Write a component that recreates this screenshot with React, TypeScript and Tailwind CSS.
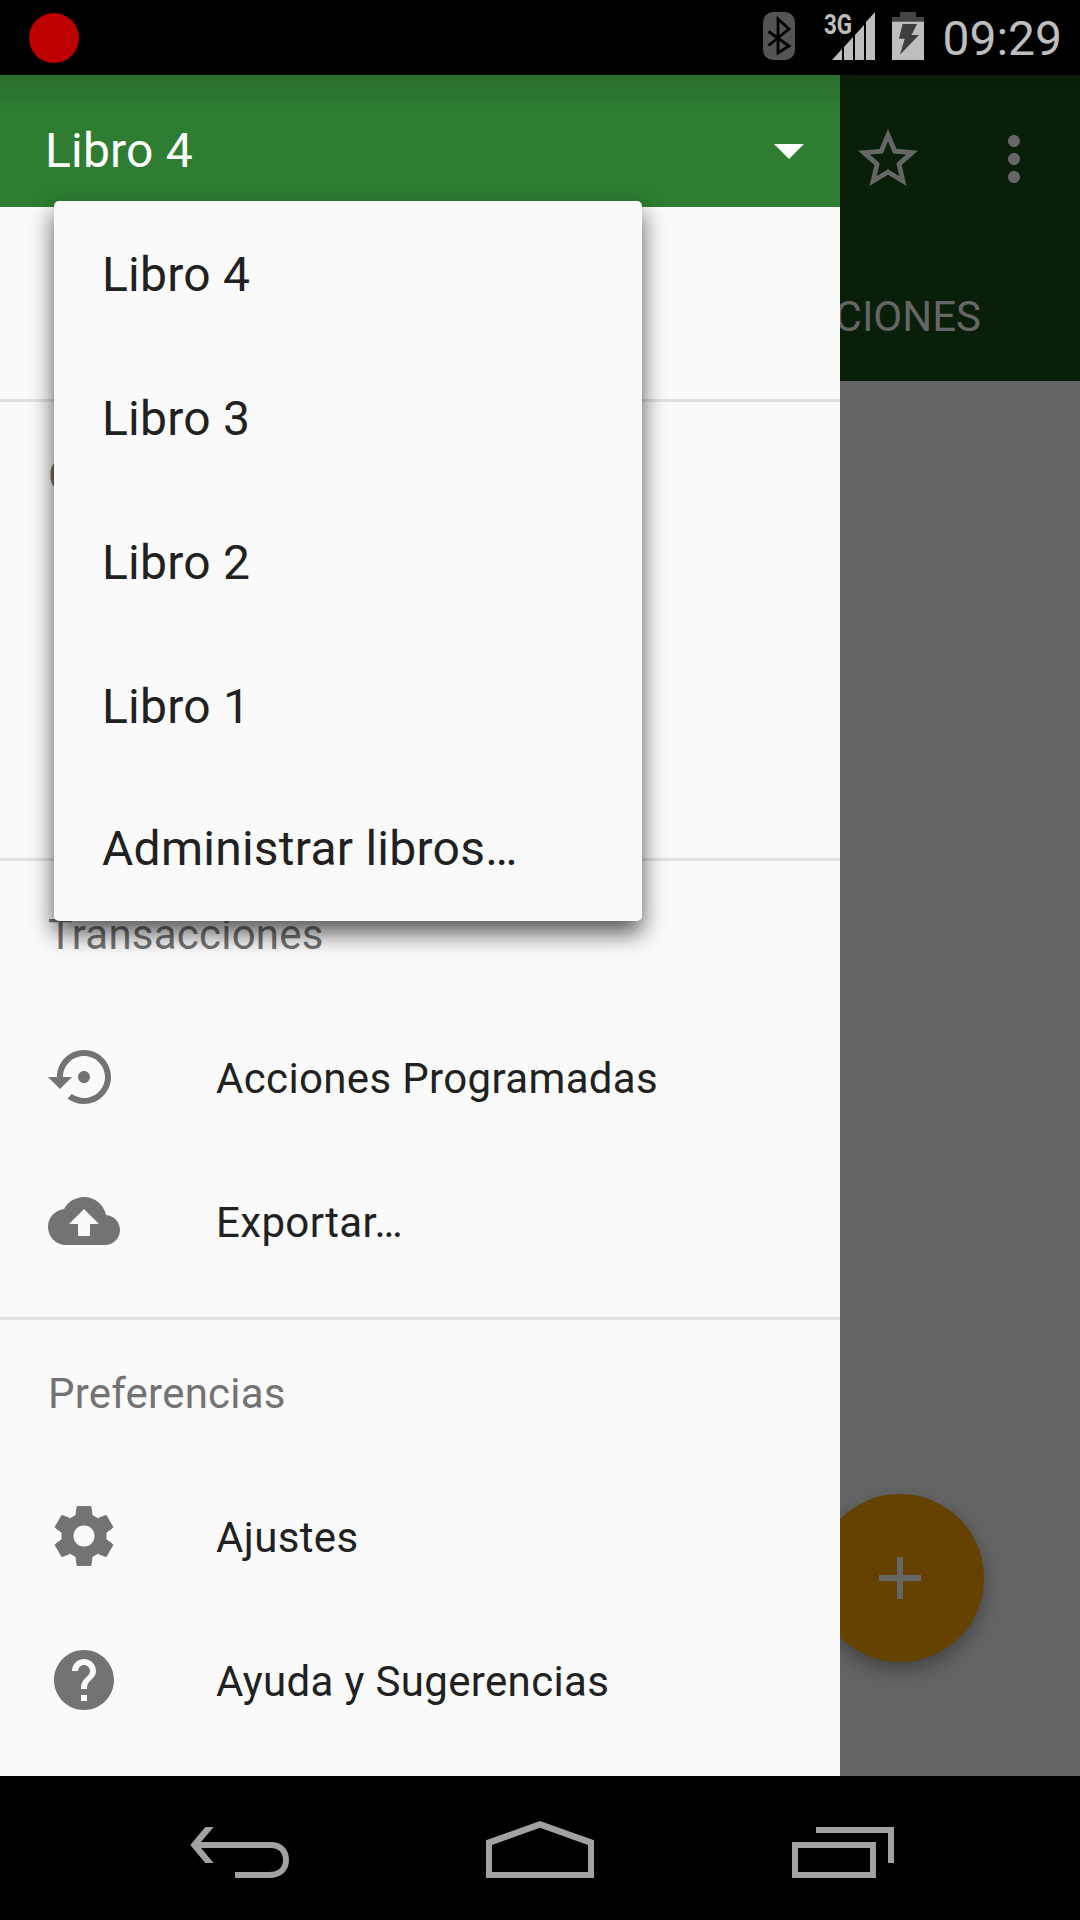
import type { ReactNode } from "react";

const paths = {
  restore:
    "M14 12c0-1.1-.9-2-2-2s-2 .9-2 2 .9 2 2 2 2-.9 2-2zm-2-9c-4.97 0-9 4.03-9 9H0l4 4 4-4H5c0-3.87 3.13-7 7-7s7 3.13 7 7-3.13 7-7 7c-1.51 0-2.91-.49-4.06-1.3l-1.42 1.44C8.04 20.3 9.94 21 12 21c4.97 0 9-4.03 9-9s-4.03-9-9-9z",
  cloud:
    "M19.35 10.04C18.67 6.59 15.64 4 12 4 9.11 4 6.6 5.64 5.35 8.04 2.34 8.36 0 10.91 0 14c0 3.31 2.69 6 6 6h13c2.76 0 5-2.24 5-5 0-2.64-2.05-4.78-4.65-4.96zM14 13v4h-4v-4H7l5-5 5 5h-3z",
  help: "M12 2C6.48 2 2 6.48 2 12s4.48 10 10 10 10-4.48 10-10S17.52 2 12 2zm1 17h-2v-2h2v2zm2.07-7.75l-.9.92C13.45 12.9 13 13.5 13 15h-2v-.5c0-1.1.45-2.1 1.17-2.83l1.24-1.26c.37-.36.59-.86.59-1.41 0-1.1-.9-2-2-2s-2 .9-2 2H8c0-2.21 1.79-4 4-4s4 1.79 4 4c0 .88-.36 1.68-.93 2.25z",
  star: "M22 9.24l-7.19-.62L12 2 9.19 8.63 2 9.24l5.46 4.73L5.82 21 12 17.27 18.18 21l-1.63-7.03L22 9.24zM12 15.4l-3.76 2.27 1-4.28-3.32-2.88 4.38-.38L12 6.1l1.71 4.04 4.38.38-3.32 2.88 1 4.28L12 15.4z",
  more: "M12 8c1.1 0 2-.9 2-2s-.9-2-2-2-2 .9-2 2 .9 2 2 2zm0 2c-1.1 0-2 .9-2 2s.9 2 2 2 2-.9 2-2-.9-2-2-2zm0 6c-1.1 0-2 .9-2 2s.9 2 2 2 2-.9 2-2-.9-2-2-2z",
  caret: "M7 10l5 5 5-5z",
  plus: "M19 13h-6v6h-2v-6H5v-2h6V5h2v6h6v2z",
};

function Icon({ d }: { d: string }) {
  return (
    <svg viewBox="0 0 24 24" className="size-[72px] shrink-0" fill="currentColor">
      <path d={d} />
    </svg>
  );
}

function Gear() {
  return (
    <svg viewBox="-12 -12 24 24" className="size-[72px] shrink-0" fill="currentColor">
      <path
        fillRule="evenodd"
        stroke="currentColor"
        strokeWidth=".3"
        strokeLinejoin="round"
        transform="scale(.985)"
        d="M-2.75-7L-2.35-10H2.35L2.75-7 4.69-5.88 7.48-7.03 9.83-2.96 7.44-1.12V1.12L9.83 2.96 7.48 7.03 4.69 5.88 2.75 7 2.35 10H-2.35L-2.75 7-4.69 5.88-7.48 7.03-9.83 2.96-7.44 1.12V-1.12L-9.83-2.96-7.48-7.03-4.69-5.88zM-3.75 0a3.75 3.75 0 1 0 7.5 0a3.75 3.75 0 1 0-7.5 0z"
      />
    </svg>
  );
}

function StatusBar() {
  return (
    <div className="flex h-[75px] shrink-0 items-center justify-between bg-black pl-[29px] pr-[18px]">
      <div className="size-[50px] rounded-full bg-[#be0000]" />
      <div className="flex items-center text-[#bebebe]">
        <svg viewBox="0 0 32 48" className="mb-[3px] mr-[30px] h-12 w-8">
          <rect width="32" height="48" rx="10" fill="#545454" />
          <path
            d="M5.5 19.5L26 34 15 41V7L26 17 5.5 33.5"
            fill="none"
            stroke="#000"
            strokeWidth="2.8"
          />
        </svg>
        <div className="relative mb-[3px] mr-[17px] h-12 w-[50px]">
          <span className="absolute -left-px top-px origin-left scale-x-[0.83] text-[27px] font-bold leading-6">
            3G
          </span>
          <svg viewBox="0 0 50 48" className="h-12 w-[50px]" fill="currentColor">
            <path d="M7 48L17 37V48zM19 48V35L28 25V48zM30 48V23L39 13V48zM41 48V10L50 0V48z" />
          </svg>
        </div>
        <svg viewBox="0 0 32 48" className="mb-[3px] mr-[18px] h-12 w-8">
          <path d="M8 0H24V5H32V10H0V5H8z" fill="#444" />
          <rect y="9.7" width="32" height="38.3" fill="#bebebe" />
          <path d="M10.5 12H25L19.5 23H27L8 42.7 12.7 26.7H7z" fill="#3e3e3e" />
        </svg>
        <span className="pt-[3px] text-[48px] leading-[56px]">09:29</span>
      </div>
    </div>
  );
}

function Background() {
  return (
    <div className="relative flex h-full flex-col bg-[#646464] text-[#666]">
      <div className="flex h-[306px] flex-col bg-[#0a1f0a]">
        <div className="flex h-[168px] items-center justify-end gap-[54px] pr-[30px]">
          <Icon d={paths.star} />
          <Icon d={paths.more} />
        </div>
        <div className="flex h-[138px] items-center justify-end pr-[99px] pt-2 text-[42px]">
          TRANSACCIONES
        </div>
      </div>
      <div className="absolute bottom-[114px] right-24 flex size-[168px] items-center justify-center rounded-full bg-[#664200] shadow-[0_8px_18px_rgba(0,0,0,0.33)]">
        <Icon d={paths.plus} />
      </div>
    </div>
  );
}

function Section({ title, children }: { title: string; children?: ReactNode }) {
  return (
    <section className="flex flex-col border-t-[3px] border-[#e0e0e0] pb-6">
      <h2 className="flex h-36 items-center px-12 pt-0.5 text-[42px] tracking-[0.22px] text-[#737373]">
        {title}
      </h2>
      {children}
    </section>
  );
}

function Item({ icon, label }: { icon: ReactNode; label: string }) {
  return (
    <div className="flex h-36 items-center gap-24 px-12 text-[42px] tracking-[0.35px] text-[#212121]">
      <span className="text-[#737373]">{icon}</span>
      <span className="pt-0.5">{label}</span>
    </div>
  );
}

const books = ["Libro 4", "Libro 3", "Libro 2", "Libro 1"];

function Drawer() {
  return (
    <aside className="absolute inset-y-0 left-0 flex w-[840px] flex-col overflow-hidden bg-[#fafafa]">
      <div className="flex h-[132px] shrink-0 items-center justify-between bg-[#2e7d32] pl-[45px] pr-[15px] pt-[18px] text-white">
        <span className="pt-0.5 text-[48px] leading-[56px] tracking-[0.2px]">Libro 4</span>
        <Icon d={paths.caret} />
      </div>
      <div className="h-48 shrink-0" />
      <Section title="Cuentas">
        <div className="h-72" />
      </Section>
      <Section title="Transacciones">
        <Item icon={<Icon d={paths.restore} />} label="Acciones Programadas" />
        <Item icon={<Icon d={paths.cloud} />} label="Exportar…" />
      </Section>
      <Section title="Preferencias">
        <Item icon={<Gear />} label="Ajustes" />
        <Item icon={<Icon d={paths.help} />} label="Ayuda y Sugerencias" />
      </Section>
    </aside>
  );
}

function BookMenu() {
  return (
    <div className="absolute left-[54px] top-[126px] w-[588px] rounded-[5px] bg-[#fafafa] text-[48px] tracking-[0.25px] text-[#212121] shadow-[0_12px_23px_rgba(0,0,0,0.66)]">
      {books.map((book) => (
        <div key={book} className="flex h-36 items-center px-12 pt-[3px]">
          {book}
        </div>
      ))}
      <div className="flex h-36 items-center px-12">Administrar libros…</div>
    </div>
  );
}

function NavBar() {
  return (
    <div className="flex h-36 shrink-0 justify-between bg-black px-[150px] text-[#a2a2a2]">
      <svg viewBox="0 0 180 144" className="h-36 w-[180px]" fill="currentColor">
        <path d="M40.3 69L55.3 51H63.7L51 66H121C132 66 139 73 139 84S131 102 119 102H85V96H119C128 96 133 92 133 84S128 72 121 72H51L63.7 87H55.3z" />
      </svg>
      <svg viewBox="0 0 180 144" className="h-36 w-[180px]" fill="currentColor">
        <path fillRule="evenodd" d="M36 64.3L90 45L144 64.3V102H36zM42 69V96H138V69L90 51.7z" />
      </svg>
      <svg viewBox="0 0 180 144" className="h-36 w-[180px]" fill="currentColor">
        <path fillRule="evenodd" d="M42 66H126V102H42zM48 72V96H120V72zM66 51H144V87H138V57H66z" />
      </svg>
    </div>
  );
}

export default function App() {
  return (
    <div className="flex h-[1920px] w-[1080px] flex-col overflow-hidden bg-black font-[Roboto,sans-serif]">
      <StatusBar />
      <main className="relative h-[1701px] shrink-0">
        <Background />
        <Drawer />
        <div className="absolute inset-x-0 top-0 h-9 bg-linear-to-b from-black/12 to-transparent" />
        <BookMenu />
      </main>
      <NavBar />
    </div>
  );
}
